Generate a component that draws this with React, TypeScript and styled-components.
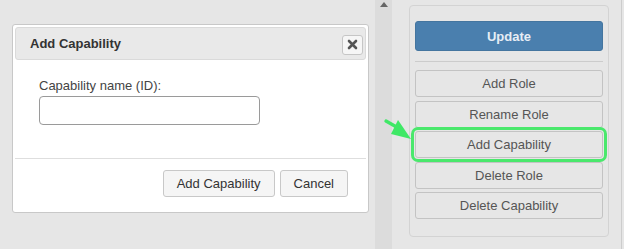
import React from "react";
import styled, { createGlobalStyle } from "styled-components";

const Global = createGlobalStyle`
  html, body { margin: 0; padding: 0; background: #e6e6e6; }
  body { font-family: "Liberation Sans", Arial, sans-serif; }
  * { box-sizing: border-box; }
`;

const Page = styled.div`
  display: flex;
  width: 624px;
  height: 249px;
  overflow: hidden;
  background: #e6e6e6;
`;

const LeftPane = styled.div`
  width: 375px;
  flex: none;
  padding: 24px 0 0 12px;
`;

const Dialog = styled.div`
  width: 357px;
  height: 189px;
  background: #fff;
  border: 1px solid #c8c8c8;
  border-radius: 3px;
  padding: 2px;
  display: flex;
  flex-direction: column;
`;

const TitleBar = styled.div`
  height: 33px;
  flex: none;
  background: #e9e9e9;
  border: 1px solid #dadada;
  border-radius: 3px;
  display: flex;
  align-items: center;
  justify-content: space-between;
  padding: 0 2px 0 14px;
`;

const Title = styled.span`
  font-size: 13px;
  font-weight: bold;
  color: #333;
`;

const CloseBtn = styled.button`
  width: 21px;
  height: 20px;
  padding: 0;
  margin-top: 2px;
  border: 1px solid #c6c6c6;
  border-radius: 3px;
  background: #f6f6f6;
  display: flex;
  align-items: center;
  justify-content: center;
`;

const Body = styled.div`
  padding: 18px 0 0 24px;
  height: 99px;
  flex: none;
  border-bottom: 1px solid #dedede;
  display: flex;
  flex-direction: column;
`;

const Label = styled.label`
  font-size: 13px;
  color: #444;
  line-height: 15px;
  margin-bottom: 3px;
`;

const TextInput = styled.input`
  width: 221px;
  height: 29px;
  border: 1px solid #9a9a9a;
  border-radius: 4px;
  background: #fff;
  outline: none;
`;

const Footer = styled.div`
  display: flex;
  justify-content: flex-end;
  gap: 5px;
  padding: 11px 18px 0 0;
`;

const DlgButton = styled.button`
  height: 27px;
  padding: 0 13px;
  font-family: "Liberation Sans", Arial, sans-serif;
  font-size: 13px;
  color: #333;
  background: #f5f5f5;
  border: 1px solid #c8c8c8;
  border-radius: 3px;
`;

const Strip = styled.div`
  width: 17px;
  flex: none;
  background: #dcdcdc;
  display: flex;
  justify-content: center;
  padding-top: 2px;
`;

const RightPane = styled.div`
  width: 229px;
  flex: none;
  padding: 5px 0 0 17px;
  position: relative;
`;

const EdgeLine = styled.div`
  width: 1px;
  flex: none;
  background: #cdcdcd;
`;

const Panel = styled.div`
  width: 200px;
  height: 232px;
  border: 1px solid #d3d3d3;
  border-radius: 4px;
  padding: 15px 5px 0 5px;
  display: flex;
  flex-direction: column;
`;

const UpdateButton = styled.button`
  height: 30px;
  width: 188px;
  background: #4a7fae;
  border: 1px solid #44759f;
  border-radius: 3px;
  color: #e6edf5;
  font-family: "Liberation Sans", Arial, sans-serif;
  font-size: 13px;
  font-weight: bold;
`;

const Sep = styled.div`
  height: 1px;
  background: #cccccc;
  margin: 10px 0 8px;
`;

const ActionList = styled.div`
  display: flex;
  flex-direction: column;
  gap: 3.5px;
`;

const ActionButton = styled.button<{ $highlight?: boolean }>`
  height: 27px;
  width: 188px;
  background: #e6e6e6;
  border: 1px solid #c3c3c3;
  border-radius: 3px;
  color: #555;
  font-family: "Liberation Sans", Arial, sans-serif;
  font-size: 13px;
  outline: ${(p) => (p.$highlight ? "3px solid #4ae86c" : "none")};
  outline-offset: 1px;
`;

const Pointer = styled.svg`
  position: absolute;
  left: -8px;
  top: 117px;
`;

const actions = ["Add Role", "Rename Role", "Add Capability", "Delete Role", "Delete Capability"];

export default function App() {
  return (
    <Page>
      <Global />
      <LeftPane>
        <Dialog>
          <TitleBar>
            <Title>Add Capability</Title>
            <CloseBtn aria-label="close">
              <svg width="11" height="11" viewBox="0 0 11 11">
                <path d="M2 2 L9 9 M9 2 L2 9" stroke="#555" strokeWidth="2.6" strokeLinecap="round" />
              </svg>
            </CloseBtn>
          </TitleBar>
          <Body>
            <Label>Capability name (ID):</Label>
            <TextInput type="text" />
          </Body>
          <Footer>
            <DlgButton>Add Capability</DlgButton>
            <DlgButton>Cancel</DlgButton>
          </Footer>
        </Dialog>
      </LeftPane>
      <Strip>
        <svg width="8" height="5" viewBox="0 0 8 5">
          <path d="M0 5 L4 0 L8 5 Z" fill="#666" />
        </svg>
      </Strip>
      <RightPane>
        <Panel>
          <UpdateButton>Update</UpdateButton>
          <Sep />
          <ActionList>
            {actions.map((a) => (
              <ActionButton key={a} $highlight={a === "Add Capability"}>
                {a}
              </ActionButton>
            ))}
          </ActionList>
        </Panel>
        <Pointer width="30" height="26" viewBox="0 0 30 26">
          <path d="M2 4 L16 12" stroke="#3fe866" strokeWidth="3.2" strokeLinecap="round" />
          <path d="M14 3 L27 22 L7 17 Z" fill="#3fe866" />
        </Pointer>
      </RightPane>
      <EdgeLine />
    </Page>
  );
}
